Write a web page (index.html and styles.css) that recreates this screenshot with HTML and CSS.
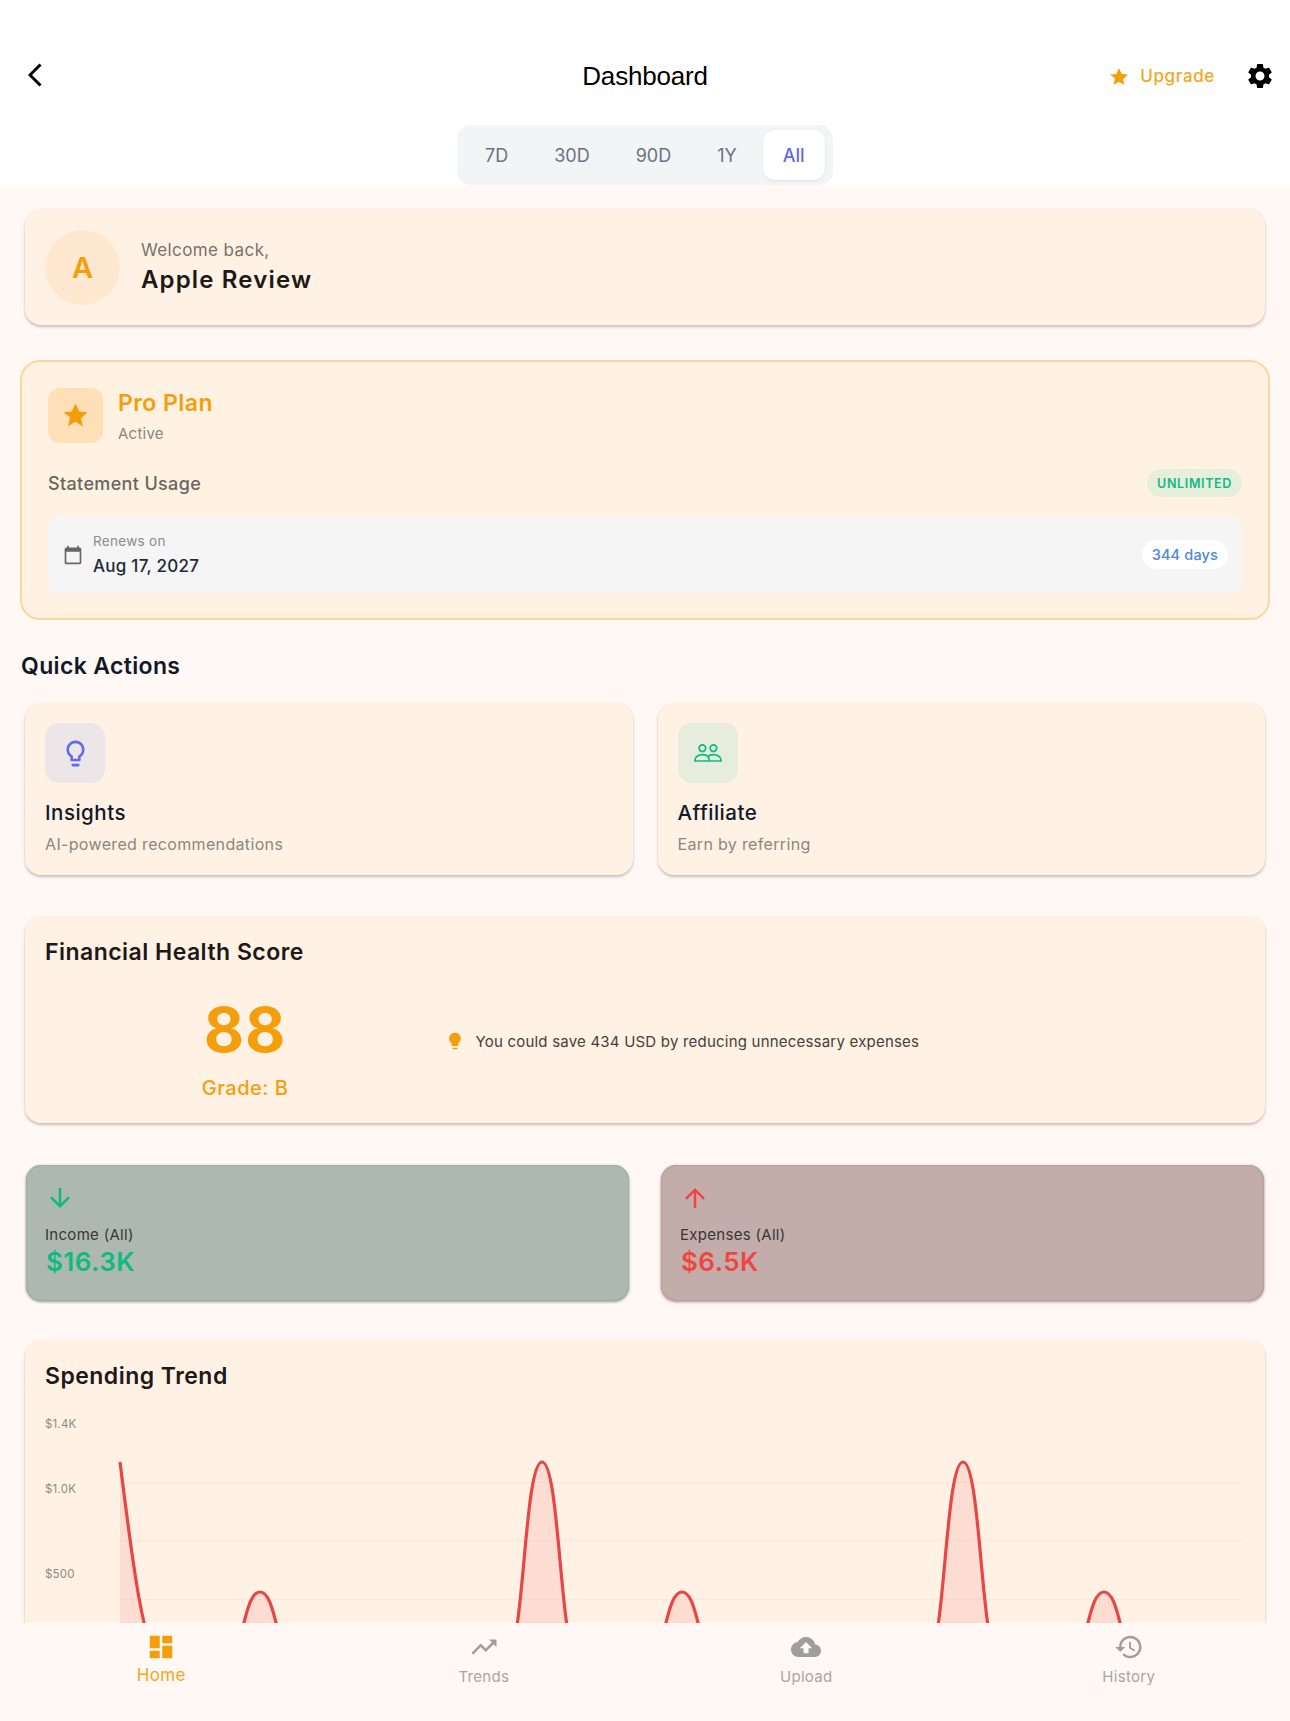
FILE: index.html
```html
<!DOCTYPE html>
<html lang="en">
<head>
<meta charset="utf-8">
<title>Dashboard</title>
<link rel="stylesheet" href="styles.css">
</head>
<body>
<div class="app">
  <header class="top">
    <div class="bar">
      <svg class="back" viewBox="0 0 14 24"><path d="M12.5 1.5 2 12l10.5 10.5"/></svg>
      <h1 class="bar-title">Dashboard</h1>
      <div class="bar-right">
        <svg class="up-star" viewBox="2 2 20 19"><path d="M12 17.27 18.18 21l-1.64-6.53L22 9.24l-6.91-.59L12 2 8.91 8.65 2 9.24l5.46 4.23L5.82 21z"/></svg>
        <span class="upgrade">Upgrade</span>
        <svg class="gear" viewBox="0 0 24 24"><path d="M19.14 12.94c.04-.3.06-.61.06-.94 0-.32-.02-.64-.07-.94l2.03-1.58c.18-.14.23-.41.12-.61l-1.92-3.32c-.12-.22-.37-.29-.59-.22l-2.39.96c-.5-.38-1.03-.7-1.62-.94l-.36-2.54c-.04-.24-.24-.41-.48-.41h-3.84c-.24 0-.43.17-.47.41l-.36 2.54c-.59.24-1.13.57-1.62.94l-2.39-.96c-.22-.08-.47 0-.59.22L2.74 8.87c-.12.21-.08.47.12.61l2.03 1.58c-.05.3-.09.63-.09.94s.02.64.07.94l-2.03 1.58c-.18.14-.23.41-.12.61l1.92 3.32c.12.22.37.29.59.22l2.39-.96c.5.38 1.03.7 1.62.94l.36 2.54c.05.24.24.41.48.41h3.84c.24 0 .44-.17.47-.41l.36-2.54c.59-.24 1.13-.56 1.62-.94l2.39.96c.22.08.47 0 .59-.22l1.92-3.32c.12-.22.07-.47-.12-.61l-2.01-1.58zM12 15.6c-1.98 0-3.6-1.62-3.6-3.6s1.62-3.6 3.6-3.6 3.6 1.62 3.6 3.6-1.62 3.6-3.6 3.6z"/></svg>
      </div>
    </div>
    <div class="tabs">
      <span class="tab">7D</span>
      <span class="tab">30D</span>
      <span class="tab">90D</span>
      <span class="tab">1Y</span>
      <span class="tab tab-on">All</span>
    </div>
  </header>

  <main class="main">
    <section class="card welcome">
      <div class="avatar">A</div>
      <div class="welcome-text">
        <p class="welcome-small">Welcome back,</p>
        <p class="welcome-name">Apple Review</p>
      </div>
    </section>

    <section class="plan">
      <div class="plan-head">
        <div class="plan-icon">
          <svg class="icon-star" viewBox="0 0 24 24"><path d="M12 17.27 18.18 21l-1.64-6.53L22 9.24l-6.91-.59L12 2 8.91 8.65 2 9.24l5.46 4.23L5.82 21z"/></svg>
        </div>
        <div>
          <p class="plan-name">Pro Plan</p>
          <p class="plan-status">Active</p>
        </div>
      </div>
      <div class="usage">
        <span class="usage-label">Statement Usage</span>
        <span class="pill-green">UNLIMITED</span>
      </div>
      <div class="renew">
        <svg class="icon-cal" viewBox="0 0 24 24"><path d="M20 3h-1V1h-2v2H7V1H5v2H4c-1.1 0-2 .9-2 2v16c0 1.1.9 2 2 2h16c1.1 0 2-.9 2-2V5c0-1.1-.9-2-2-2zm0 18H4V8h16v13z"/></svg>
        <div class="renew-text">
          <p class="renew-small">Renews on</p>
          <p class="renew-date">Aug 17, 2027</p>
        </div>
        <span class="pill-days">344 days</span>
      </div>
    </section>

    <h2 class="section-title">Quick Actions</h2>
    <div class="actions">
      <section class="card action">
        <div class="action-icon tint-purple">
          <svg class="icon-bulb" viewBox="0 0 24 24"><path d="M9 21c0 .55.45 1 1 1h4c.55 0 1-.45 1-1v-1H9v1zm3-19C8.14 2 5 5.14 5 9c0 2.38 1.19 4.47 3 5.74V17c0 .55.45 1 1 1h6c.55 0 1-.45 1-1v-2.26c1.81-1.27 3-3.36 3-5.74 0-3.86-3.14-7-7-7zm2.85 11.1-.85.6V16h-4v-2.3l-.85-.6C7.8 12.16 7 10.63 7 9c0-2.76 2.24-5 5-5s5 2.24 5 5c0 1.63-.8 3.16-2.15 4.1z"/></svg>
        </div>
        <p class="action-title">Insights</p>
        <p class="action-sub">AI-powered recommendations</p>
      </section>
      <section class="card action">
        <div class="action-icon tint-green">
          <svg class="icon-people" viewBox="0 0 28 18">
            <circle cx="8.4" cy="4.2" r="3.3"/>
            <circle cx="19.4" cy="4.2" r="3.3"/>
            <path d="M1 17h26v-1c0-3.4-4-5.300-8-5.300-2.500 0-4.200.8-5 1.900-1-1.100-3-1.900-5-1.900-4 0-8 1.900-8 5.300z"/>
            <path d="M14 12.600c1 1.200 1.500 2.800 1.500 4.400"/>
          </svg>
        </div>
        <p class="action-title">Affiliate</p>
        <p class="action-sub">Earn by referring</p>
      </section>
    </div>

    <section class="card health">
      <h3 class="card-title">Financial Health Score</h3>
      <div class="health-body">
        <div class="score">
          <p class="score-num">88</p>
          <p class="score-grade">Grade: B</p>
        </div>
        <div class="tip">
          <svg class="icon-tip" viewBox="0 0 24 24"><path d="M9 21c0 .55.45 1 1 1h4c.55 0 1-.45 1-1v-1H9v1zm3-19C8.140 2 5 5.140 5 9c0 2.380 1.190 4.470 3 5.740V17c0 .55.45 1 1 1h6c.55 0 1-.45 1-1v-2.260c1.810-1.270 3-3.360 3-5.740 0-3.860-3.140-7-7-7z"/></svg>
          <span class="tip-text">You could save 434 USD by reducing unnecessary expenses</span>
        </div>
      </div>
    </section>

    <div class="totals">
      <section class="total total-in">
        <svg class="arrow" viewBox="0 0 24 24"><path d="M20 12l-1.410-1.410L13 16.170V4h-2v12.170l-5.580-5.590L4 12l8 8 8-8z"/></svg>
        <p class="total-label">Income (All)</p>
        <p class="total-value">$16.3K</p>
      </section>
      <section class="total total-out">
        <svg class="arrow" viewBox="0 0 24 24"><path d="M4 12l1.410 1.410L11 7.830V20h2V7.830l5.580 5.590L20 12l-8-8-8 8z"/></svg>
        <p class="total-label">Expenses (All)</p>
        <p class="total-value">$6.5K</p>
      </section>
    </div>

    <section class="card trend">
      <h3 class="card-title">Spending Trend</h3>
      <svg class="chart" viewBox="45 1410 1200 290">
        <g class="grid">
          <path d="M120 1482.500H1243M120 1540.500H1243M120 1599.500H1243"/>
        </g>
        <g class="axis">
          <text x="45" y="1428">$1.4K</text>
          <text x="45" y="1493">$1.0K</text>
          <text x="45" y="1578">$500</text>
        </g>
        <path class="area" d="M120 1462C130 1540 143 1657 160 1657H227C243.500 1657 243.500 1592 260 1592C276.500 1592 276.500 1657 293 1657H506.500C524 1657 524 1462 542 1462C560 1462 560 1657 577.500 1657H649C665.500 1657 665.500 1592 682 1592C698.500 1592 698.500 1657 715 1657H927.500C945 1657 945 1462 963 1462C981 1462 981 1657 998.500 1657H1071C1087.500 1657 1087.500 1592 1104 1592C1120.500 1592 1120.500 1657 1137 1657H1245V1657H120Z"/>
        <path class="line" d="M120 1462C130 1540 143 1657 160 1657H227C243.500 1657 243.500 1592 260 1592C276.500 1592 276.500 1657 293 1657H506.500C524 1657 524 1462 542 1462C560 1462 560 1657 577.500 1657H649C665.500 1657 665.500 1592 682 1592C698.500 1592 698.500 1657 715 1657H927.500C945 1657 945 1462 963 1462C981 1462 981 1657 998.500 1657H1071C1087.500 1657 1087.500 1592 1104 1592C1120.500 1592 1120.500 1657 1137 1657H1245"/>
      </svg>
    </section>
  </main>

  <nav class="nav">
    <div class="nav-item nav-on">
      <svg class="nav-icon" viewBox="0 0 24 24"><path d="M3 13h8V3H3v10zm0 8h8v-6H3v6zm10 0h8V11h-8v10zm0-18v6h8V3h-8z"/></svg>
      <span class="nav-label">Home</span>
    </div>
    <div class="nav-item">
      <svg class="nav-icon" viewBox="0 0 24 24"><path d="M16 6l2.290 2.290-4.880 4.880-4-4L2 16.590 3.410 18l6-6 4 4 6.300-6.290L22 12V6z"/></svg>
      <span class="nav-label">Trends</span>
    </div>
    <div class="nav-item">
      <svg class="nav-icon" viewBox="0 0 24 24"><path d="M19.350 10.040C18.670 6.590 15.640 4 12 4 9.110 4 6.600 5.640 5.350 8.040 2.340 8.360 0 10.910 0 14c0 3.310 2.690 6 6 6h13c2.760 0 5-2.240 5-5 0-2.640-2.050-4.780-4.650-4.960zM14 13v4h-4v-4H7l5-5 5 5h-3z"/></svg>
      <span class="nav-label">Upload</span>
    </div>
    <div class="nav-item">
      <svg class="nav-icon" viewBox="0 0 24 24"><path d="M13 3c-4.970 0-9 4.030-9 9H1l3.890 3.890.07.14L9 12H6c0-3.870 3.130-7 7-7s7 3.130 7 7-3.130 7-7 7c-1.930 0-3.680-.79-4.940-2.060l-1.420 1.420C8.270 19.990 10.510 21 13 21c4.970 0 9-4.030 9-9s-4.030-9-9-9zm-1 5v5l4.280 2.540.72-1.210-3.500-2.080V8H12z"/></svg>
      <span class="nav-label">History</span>
    </div>
  </nav>
</div>
</body>
</html>
```
FILE: styles.css
```css
* { box-sizing: border-box; }
html, body { margin: 0; padding: 0; }
body { font-family: Inter, "Liberation Sans", sans-serif; background: #fff8f4; color: #1f1a17; }
p, h1, h2, h3 { margin: 0; font-weight: 400; }

.app { height: 1721px; display: flex; flex-direction: column; overflow: hidden; }

/* header */
.top { background: #fff; height: 185px; padding-top: 50px; flex: none; }
.bar { height: 52px; position: relative; display: flex; align-items: center; justify-content: center; }
.back { position: absolute; left: 28px; top: 13px; width: 14px; height: 24px; fill: none; stroke: #000; stroke-width: 3; }
.bar-title { font-family: "Liberation Sans", sans-serif; font-size: 26px; line-height: 50px; letter-spacing: -.2px; color: #000; }
.bar-right { position: absolute; right: 15px; top: 0; height: 52px; display: flex; align-items: center; }
.up-star { width: 18px; height: 17px; fill: #f59e0b; margin-right: 12.500px; }
.upgrade { font-size: 17px; font-weight: 500; color: #f5a623; letter-spacing: .65px; margin-right: 30px; }
.gear { width: 30px; height: 30px; fill: #000; }
.tabs { width: 376px; height: 60px; margin: 23px auto 0; padding: 5px 7px 5px 8px; display: flex; gap: 6px; background: #f3f4f6; border-radius: 14px; }
.tab { height: 50px; padding: 0 20px; display: flex; align-items: center; font-size: 18px; color: #6b7280; }
.tab-on { background: #fff; color: #6366f1; font-weight: 500; border-radius: 12px; box-shadow: 0 1px 3px rgba(0,0,0,.08); }

/* main */
.main { flex: 1; min-height: 0; overflow: hidden; padding: 24px 21px 0; background: #fff8f4; }
.card { background: #fff1e4; border-radius: 16px; margin: 0 4px; box-shadow: 0 2px 3px rgba(0,0,0,.22), 0 0 2px rgba(0,0,0,.05); }
.welcome { height: 116px; padding: 21px 20px; display: flex; align-items: center; gap: 21px; }
.welcome-text { padding-top: 2px; }
.avatar { width: 75px; height: 75px; border-radius: 50%; background: #ffe8cf; color: #f59e0b; font-size: 29px; font-weight: 600; display: flex; align-items: center; justify-content: center; flex: none; }
.welcome-small { font-size: 17px; line-height: 24px; color: #78716c; letter-spacing: .4px; }
.welcome-name { font-size: 24px; line-height: 36px; font-weight: 600; letter-spacing: 1.150px; color: #1c1917; }

/* plan */
.plan { height: 260px; margin: 35px -1px 0; padding: 26px 26px 0; background: #fff2e3; border: 2.500px solid #fbd79f; border-radius: 20px; }
.plan-head { display: flex; gap: 15px; height: 55px; }
.plan-icon { width: 55px; height: 55px; border-radius: 12px; background: #fee0b8; display: flex; align-items: center; justify-content: center; flex: none; }
.icon-star { width: 29px; height: 29px; fill: #f59e0b; }
.plan-name { font-size: 23px; line-height: 30px; font-weight: 600; letter-spacing: .45px; color: #f59e0b; }
.plan-status { font-size: 15px; line-height: 20px; margin-top: 6px; letter-spacing: .25px; color: #8c8680; }
.usage { height: 28px; margin-top: 26px; display: flex; align-items: center; justify-content: space-between; }
.usage-label { font-size: 18px; font-weight: 500; letter-spacing: .35px; color: #6b6560; }
.pill-green { height: 28px; padding: 0 10px; display: flex; align-items: center; border-radius: 14px; background: #e6eedc; color: #10b981; font-size: 12.500px; font-weight: 600; letter-spacing: .65px; }
.renew { height: 76px; margin-top: 20px; padding: 0 14px 0 15px; display: flex; align-items: center; background: #f5f5f5; border-radius: 10px; }
.icon-cal { width: 20px; height: 20px; fill: #666; margin-right: 10px; flex: none; }
.renew-text { flex: 1; }
.renew-small { font-size: 13.500px; line-height: 18px; letter-spacing: .3px; color: #8c8c8c; }
.renew-date { font-size: 17px; line-height: 24px; margin-top: 4px; font-weight: 500; letter-spacing: .25px; color: #1f2937; }
.pill-days { height: 29px; margin-top: -2px; padding: 0 10px; display: flex; align-items: center; border-radius: 15px; background: #fff; color: #4f86db; font-size: 14.500px; font-weight: 500; letter-spacing: .15px; }

/* quick actions */
.section-title { height: 83px; line-height: 93px; font-size: 23px; font-weight: 600; letter-spacing: .35px; color: #111827; }
.actions { display: flex; }
.actions .card { flex: 1; }
.actions .card + .card { margin-left: 21px; }
.action { height: 172px; padding: 20px; }
.action-icon { width: 60px; height: 60px; border-radius: 14px; display: flex; align-items: center; justify-content: center; }
.tint-purple { background: #ede6e8; }
.tint-green { background: #e6eddd; }
.icon-bulb { width: 31px; height: 31px; fill: #6366f1; }
.icon-people { width: 28px; height: 18px; fill: none; stroke: #10b981; stroke-width: 1.700; }
.action-title { font-size: 20.500px; line-height: 28px; margin-top: 15.500px; font-weight: 500; letter-spacing: .5px; color: #111827; }
.action-sub { font-size: 16px; line-height: 22px; margin-top: 6px; letter-spacing: .34px; color: #8c8680; }

/* health */
.health { height: 207px; margin-top: 41px; padding: 20px; }
.card-title { font-size: 23px; line-height: 32px; font-weight: 600; letter-spacing: .47px; color: #1c1917; }
.health-body { display: flex; align-items: center; height: 146px; }
.score { width: 400px; margin-top: 14px; text-align: center; }
.score-num { font-size: 62px; line-height: 72px; font-weight: 700; color: #f59e0b; letter-spacing: 1px; }
.score-grade { font-size: 20px; line-height: 28px; margin-top: 8px; font-weight: 500; letter-spacing: .5px; color: #f59e0b; }
.tip { display: flex; align-items: center; }
.icon-tip { width: 20px; height: 20px; fill: #f59e0b; margin-right: 10.500px; }
.tip-text { font-size: 15px; letter-spacing: .21px; color: #44403c; }

/* totals */
.totals { display: flex; gap: 32px; margin: 42px 5px 0; }
.total { flex: 1; height: 136px; padding: 18px 19px; border-radius: 15px; }
.total-in { background: #adb9b0; box-shadow: 0 1px 3px rgba(60,90,70,.6), inset 0 0 2px rgba(60,90,70,.35); }
.total-out { background: #c2adab; box-shadow: 0 1px 3px rgba(110,60,60,.6), inset 0 0 2px rgba(110,60,60,.35); }
.arrow { display: block; width: 30px; height: 30px; }
.total-in .arrow { fill: #10b981; }
.total-out .arrow { fill: #ef4444; }
.total-label { font-size: 15px; line-height: 20px; margin-top: 12px; letter-spacing: .3px; color: #3a3634; }
.total-value { font-size: 26px; line-height: 34px; margin: 0 0 0 1px; font-weight: 600; letter-spacing: .45px; }
.total-in .total-value { color: #10b981; }
.total-out .total-value { color: #ef4444; }

/* trend */
.trend { height: 370px; margin-top: 39px; padding: 20px; }
.chart { display: block; width: 1200px; height: 290px; margin-top: 18px; }
.grid path { stroke: #f8e8df; stroke-width: 1; fill: none; }
.axis text { font-family: Inter, "Liberation Sans", sans-serif; font-size: 11.500px; letter-spacing: .2px; fill: #8f8a86; }
.area { fill: rgba(239,68,68,.11); }
.line { fill: none; stroke: #e84545; stroke-width: 3.200; }

/* nav */
.nav { height: 98px; flex: none; display: flex; background: #fff8f4; padding-top: 9px; position: relative; }
.nav-item { flex: 1; display: flex; flex-direction: column; align-items: center; }
.nav-icon { width: 30px; height: 30px; fill: #9e9e9e; }
.nav-label { font-size: 15px; line-height: 20px; margin-top: 5px; letter-spacing: .3px; color: #a8a5a3; }
.nav-on .nav-icon { fill: #f59e0b; }
.nav-on .nav-label { font-size: 17px; margin-top: 3px; letter-spacing: .4px; color: #f5a623; }
```
